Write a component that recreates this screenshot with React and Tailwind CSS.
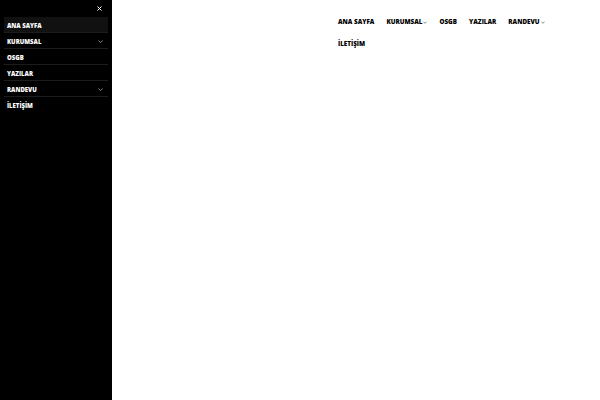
import React from "react";

const Chevron = ({ className = "", sw = "1.3" }) => (
  <svg viewBox="0 0 10 6" className={className} fill="none" stroke="currentColor" strokeWidth={sw}>
    <path d="M1 1l4 4 4-4" />
  </svg>
);

const sideItems = [
  { label: "ANA SAYFA", active: true },
  { label: "KURUMSAL", sub: true },
  { label: "OSGB" },
  { label: "YAZILAR" },
  { label: "RANDEVU", sub: true },
  { label: "İLETİŞİM", last: true },
];

const navItems = [
  { label: "ANA SAYFA" },
  { label: "KURUMSAL", sub: true },
  { label: "OSGB" },
  { label: "YAZILAR" },
  { label: "RANDEVU", sub: true },
  { label: "İLETİŞİM" },
];

export default function App() {
  return (
    <div className="flex w-[600px] h-[400px] bg-white" style={{ fontFamily: "'Open Sans', 'Liberation Sans', sans-serif" }}>
      <aside className="w-[112px] h-[400px] bg-black flex flex-col">
        <div className="h-[17px] flex justify-end items-center pr-[10px] pb-[1px]">
          <svg viewBox="0 0 10 10" className="w-[5px] h-[5px] text-white" stroke="currentColor" strokeWidth="2">
            <path d="M1 1l8 8M9 1l-8 8" />
          </svg>
        </div>
        <ul className="mx-[4px] flex flex-col">
          {sideItems.map((it) => (
            <li
              key={it.label}
              className={`h-[16px] flex items-center justify-between pl-[3px] pr-[5px] pt-[2px] text-white text-[6px] font-extrabold leading-none ${it.active ? "bg-[#111111]" : ""} ${it.last ? "" : "border-b border-[#1c1c1c]"}`}
            >
              <span>{it.label}</span>
              {it.sub && <Chevron className="w-[5px] h-[3px] text-[#cccccc]" />}
            </li>
          ))}
        </ul>
      </aside>
      <main className="flex-1">
        <nav className="ml-[226px] mt-[16px] w-[230px] flex flex-wrap gap-x-[12px] gap-y-[10px]">
          {navItems.map((it) => (
            <div key={it.label} className="h-[12px] flex items-center gap-[1px] text-black text-[6.3px] font-extrabold leading-none">
              <span>{it.label}</span>
              {it.sub && <Chevron className="w-[4px] h-[3px] text-[#444444]" sw="1.6" />}
            </div>
          ))}
        </nav>
      </main>
    </div>
  );
}
